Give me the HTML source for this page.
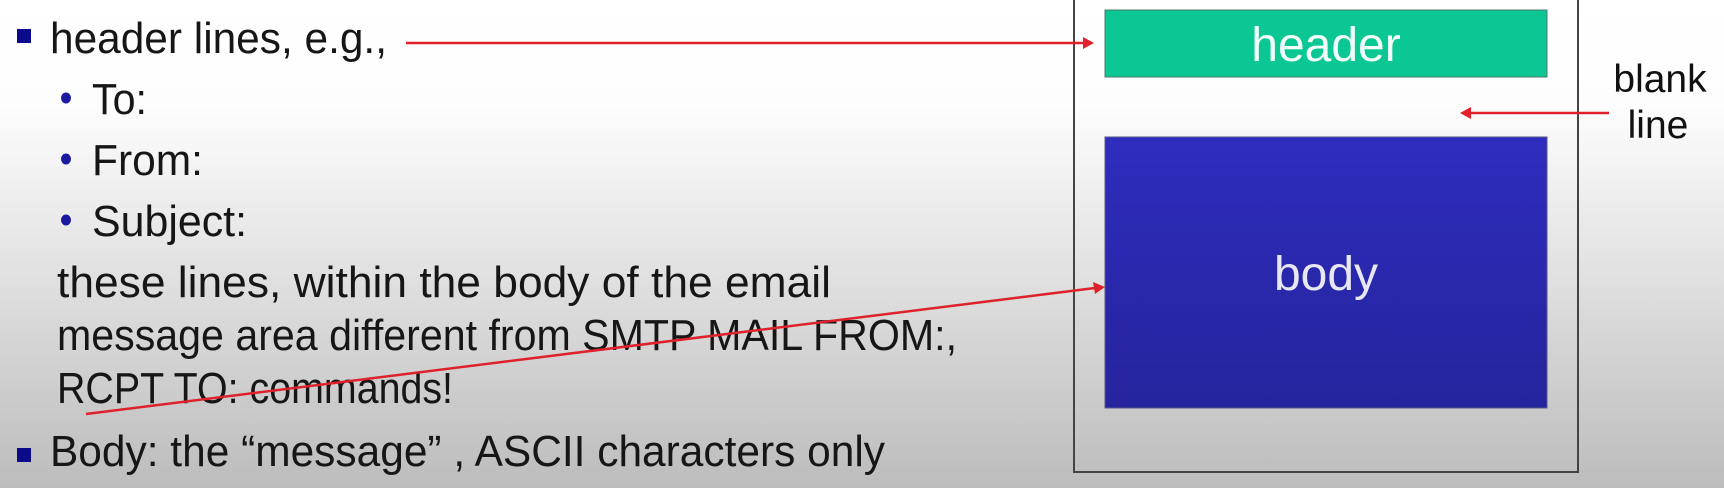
<!DOCTYPE html>
<html><head><meta charset="utf-8"><style>
html,body{margin:0;padding:0;width:1724px;height:488px;overflow:hidden;}
</style></head><body>
<svg width="1724" height="488" viewBox="0 0 1724 488" xmlns="http://www.w3.org/2000/svg">
<defs>
<linearGradient id="bg" x1="0" y1="0" x2="0" y2="1">
<stop offset="0" stop-color="#ffffff"/>
<stop offset="0.22" stop-color="#fdfdfd"/>
<stop offset="0.5" stop-color="#e6e6e6"/>
<stop offset="1" stop-color="#bcbcbc"/>
</linearGradient>
<linearGradient id="bd" x1="0" y1="0" x2="0" y2="1">
<stop offset="0" stop-color="#2e2dbe"/>
<stop offset="1" stop-color="#25239c"/>
</linearGradient>
</defs>
<rect width="1724" height="488" fill="url(#bg)"/>
<rect x="1074" y="-5" width="504" height="477" fill="none" stroke="#444" stroke-width="2"/>
<rect x="1105" y="10" width="442" height="67" fill="#0bc794" stroke="#4a7a6a" stroke-width="1"/>
<rect x="1105" y="137" width="442" height="271" fill="url(#bd)" stroke="#555a8a" stroke-width="1"/>
<g font-family="Liberation Sans, Arial, sans-serif">
<text x="1326" y="61" font-size="48" fill="#f2fff8" text-anchor="middle">header</text>
<text x="1326" y="290" font-size="48" fill="#e8e8f4" text-anchor="middle">body</text>
<text x="1660" y="92" font-size="39" fill="#111" text-anchor="middle">blank</text>
<text x="1658" y="138" font-size="39" fill="#111" text-anchor="middle">line</text>
</g>
<rect x="17" y="29" width="14" height="14" fill="#0a0a8a"/>
<rect x="17" y="448" width="14" height="14" fill="#0a0a8a"/>
<ellipse cx="66" cy="98" rx="5" ry="5.5" fill="#1a1aa0"/>
<ellipse cx="66" cy="159" rx="5" ry="5.5" fill="#1a1aa0"/>
<ellipse cx="66" cy="220" rx="5" ry="5.5" fill="#1a1aa0"/>
<g font-family="Liberation Sans, Arial, sans-serif" font-size="44" fill="#161616">
<text x="50" y="53" textLength="337" lengthAdjust="spacingAndGlyphs">header lines, e.g.,</text>
<text x="92" y="114" textLength="55" lengthAdjust="spacingAndGlyphs">To:</text>
<text x="92" y="175" textLength="111" lengthAdjust="spacingAndGlyphs">From:</text>
<text x="92" y="236" textLength="155" lengthAdjust="spacingAndGlyphs">Subject:</text>
<text x="57" y="297" textLength="774" lengthAdjust="spacingAndGlyphs">these lines, within the body of the email</text>
<text x="57" y="350" textLength="900" lengthAdjust="spacingAndGlyphs">message area different from SMTP MAIL FROM:,</text>
<text x="57" y="403" textLength="396" lengthAdjust="spacingAndGlyphs">RCPT TO: commands!</text>
<text x="50" y="466" textLength="835" lengthAdjust="spacingAndGlyphs">Body: the “message” , ASCII characters only</text>
</g>
<g stroke="#e0202a" stroke-width="2.5" fill="#e0202a">
<line x1="406" y1="43" x2="1086" y2="43"/>
<polygon points="1094,43 1083,37 1083,49" stroke="none"/>
<line x1="1609" y1="113" x2="1470" y2="113"/>
<polygon points="1460,113 1471,107 1471,119" stroke="none"/>
<line x1="86" y1="414" x2="1095" y2="288"/>
<polygon points="1105,287 1093,282 1095,294" stroke="none"/>
</g>
</svg>
</body></html>
